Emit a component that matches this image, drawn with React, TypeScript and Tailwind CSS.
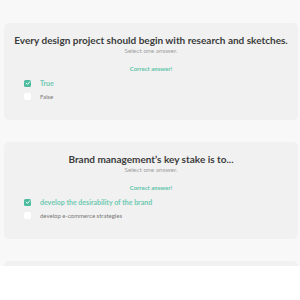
const questions = [
  {
    title: "Every design project should begin with research and sketches.",
    options: [
      { label: "True", checked: true },
      { label: "False", checked: false },
    ],
  },
  {
    title: "Brand management\u2019s key stake is to...",
    options: [
      { label: "develop the desirability of the brand", checked: true },
      { label: "develop e-commerce strategies", checked: false },
    ],
  },
];

const Check = ({ checked }: { checked: boolean }) =>
  checked ? (
    <span className="flex h-[7px] w-[7px] items-center justify-center rounded-[1.5px] bg-[#4dbb9e]">
      <svg viewBox="0 0 10 10" className="h-[6px] w-[6px]">
        <path d="M2 5.2 L4.2 7.3 L8 3" fill="none" stroke="#fff" strokeWidth="1.6" strokeLinecap="round" strokeLinejoin="round" />
      </svg>
    </span>
  ) : (
    <span className="h-[7px] w-[7px] rounded-[2px] bg-white" />
  );

const Question = ({ title, options }: (typeof questions)[number]) => (
  <div className="flex h-[97px] shrink-0 flex-col items-center rounded-[5px] bg-[#f1f1f1] pt-[11px]">
    <h2 className="whitespace-nowrap text-[10px] font-bold leading-[13px] text-[#3b3b3b]">{title}</h2>
    <p className="text-[6.5px] leading-[8px] text-[#a0a0a0]">Select one answer.</p>
    <p className="mt-[10px] text-[6px] font-bold leading-[8px] text-[#5cc4a8]">Correct answer!</p>
    <div className="mt-[6px] flex w-full flex-col gap-[5px] pl-[20px]">
      {options.map((o) => (
        <div key={o.label} className="flex h-[8px] items-center gap-[9px]">
          <Check checked={o.checked} />
          <span
            className={
              o.checked
                ? "text-[7px] font-bold text-[#6fcab1]"
                : "text-[6px] font-normal text-[#777]"
            }
          >
            {o.label}
          </span>
        </div>
      ))}
    </div>
  </div>
);

export default function App() {
  return (
    <div className="h-[300px] w-[300px] bg-white font-['Lato',sans-serif]">
      <div className="flex h-[266px] flex-col gap-[22px] overflow-hidden bg-[#f8f8f8] px-[4px] pt-[23px] pr-[2px]">
        {questions.map((q) => (
          <Question key={q.title} {...q} />
        ))}
        <div className="h-[97px] shrink-0 rounded-[5px] bg-[#f1f1f1]" />
      </div>
    </div>
  );
}
